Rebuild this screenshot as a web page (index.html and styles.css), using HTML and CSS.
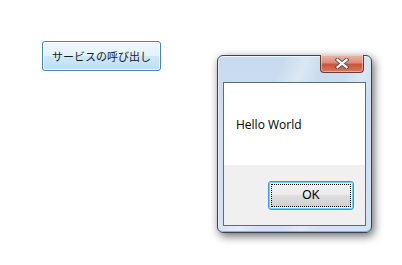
FILE: index.html
```html
<!DOCTYPE html>
<html>
<head>
<link rel="stylesheet" href="styles.css">
</head>
<body>
<div class="desktop">
  <button class="aero-btn hover">サービスの呼び出し</button>

  <div class="msgwin">
    <div class="close-btn">
      <svg width="16" height="11" viewBox="0 0 16 11">
        <path d="M3.5 1.8 L12.5 9.2 M12.5 1.8 L3.5 9.2" stroke="#505050" stroke-width="4" stroke-linecap="square"/>
        <path d="M3.5 1.8 L12.5 9.2 M12.5 1.8 L3.5 9.2" stroke="#f4f4f4" stroke-width="2.2" stroke-linecap="square"/>
      </svg>
    </div>
    <div class="client">
      <div class="msg-area">Hello World</div>
      <div class="btn-area">
        <button class="aero-btn ok-btn"><span class="focus">OK</span></button>
      </div>
    </div>
  </div>
</div>
</body>
</html>
```

FILE: styles.css
```css
* {box-sizing: border-box;}

body {
  margin: 0;
  background-color: #ffffff;
  font-family: "Open Sans", "Noto Sans CJK JP", sans-serif;
}

.desktop {
  position: relative;
  width: 402px;
  height: 265px;
  padding: 41px 0 0 42px;
}

.aero-btn {
  display: block;
  margin: 0;
  padding: 0;
  border: 1px solid #707070;
  border-radius: 3px;
  font-size: 12px;
  color: #000;
  background: linear-gradient(to bottom, #f2f2f2 0%, #ebebeb 49%, #dddddd 50%, #cfcfcf 100%);
  box-shadow: inset 0 0 0 1px rgba(255,255,255,0.8);
}

.aero-btn.hover {
  width: 119px;
  height: 30px;
  border-color: #4a86b3;
  font-family: "Noto Sans CJK JP", sans-serif;
  font-size: 11px;
  color: #1a1a1a;
  background: linear-gradient(to bottom, #f0f8fd 0%, #e2f2fb 49%, #cde9f8 50%, #bcdff2 100%);
}

/* message box window */
.msgwin {
  position: absolute;
  left: 217px;
  top: 55px;
  width: 155px;
  height: 178px;
  padding: 26px 5px 6px 5px;
  border: 1px solid #344456;
  border-radius: 6px;
  background:
    linear-gradient(112deg, rgba(255,255,255,0) 30%, rgba(255,255,255,0.35) 40%, rgba(255,255,255,0) 48%, rgba(255,255,255,0) 60%, rgba(255,255,255,0.3) 68%, rgba(255,255,255,0) 76%),
    linear-gradient(to bottom, #c7dbee 0%, #cfe0f1 40%, #d3e3f3 100%);
  box-shadow: inset 0 1px 0 #eef5fb, inset 1px 0 0 #e4eef8, inset 0 -1px 0 #4ec8ef, 2px 3px 10px rgba(0,0,0,0.6);
}

.close-btn {
  position: absolute;
  top: -1px;
  right: 7px;
  width: 44px;
  height: 18px;
  border: 1px solid #6b3a30;
  border-top: none;
  border-radius: 0 0 4px 4px;
  background: linear-gradient(to bottom, #e8b8aa 0%, #dc8c78 45%, #c9553d 55%, #d9775c 100%);
  box-shadow: inset 0 0 0 1px rgba(255,225,210,0.5);
  display: flex;
  align-items: center;
  justify-content: center;
}

.client {
  height: 100%;
  border: 1px solid #5d6c7d;
  background-color: #f0f0f0;
  display: flex;
  flex-direction: column;
}

.msg-area {
  height: 82px;
  background-color: #ffffff;
  padding: 34px 0 0 12px;
  font-size: 12px;
  line-height: 16px;
  color: #000;
}

.btn-area {
  flex: 1;
  display: flex;
  justify-content: flex-end;
  align-items: center;
  padding-right: 11px;
}

.ok-btn {
  width: 86px;
  height: 29px;
  padding: 2px;
  border-color: #3399dd;
  box-shadow: inset 0 0 0 1px #6fd3f8, inset 0 0 0 2px rgba(255,255,255,0.6);
  font-size: 12px;
}

.ok-btn .focus {
  display: flex;
  align-items: center;
  justify-content: center;
  height: 100%;
  border: 1px dotted #000;
}
```
